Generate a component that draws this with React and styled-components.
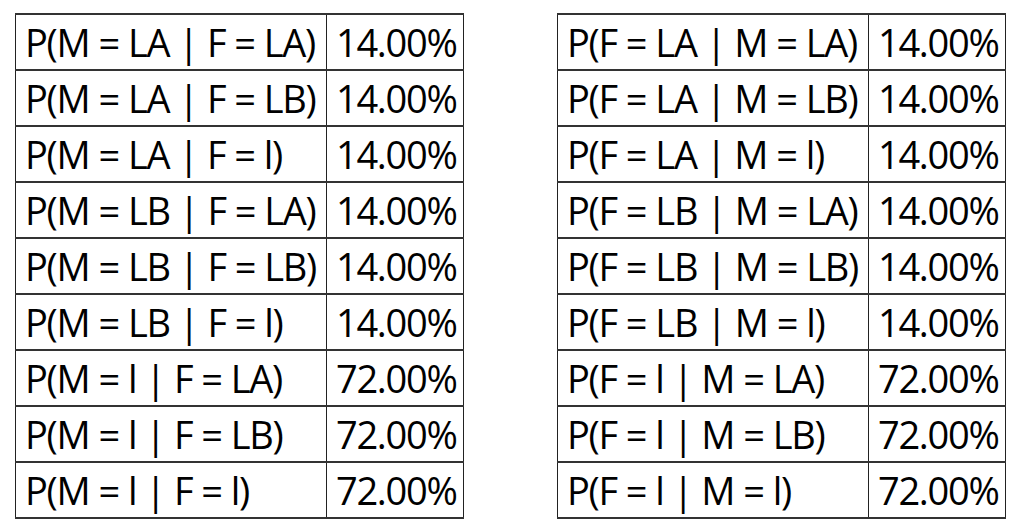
import React from "react";
import styled, { createGlobalStyle } from "styled-components";

const GlobalStyle = createGlobalStyle`
  html, body {
    margin: 0;
    padding: 0;
    background: #ffffff;
  }
`;

const left = [
  ["P(M = LA | F = LA)", "14.00%"],
  ["P(M = LA | F = LB)", "14.00%"],
  ["P(M = LA | F = l)", "14.00%"],
  ["P(M = LB | F = LA)", "14.00%"],
  ["P(M = LB | F = LB)", "14.00%"],
  ["P(M = LB | F = l)", "14.00%"],
  ["P(M = l | F = LA)", "72.00%"],
  ["P(M = l | F = LB)", "72.00%"],
  ["P(M = l | F = l)", "72.00%"],
];

const right = [
  ["P(F = LA | M = LA)", "14.00%"],
  ["P(F = LA | M = LB)", "14.00%"],
  ["P(F = LA | M = l)", "14.00%"],
  ["P(F = LB | M = LA)", "14.00%"],
  ["P(F = LB | M = LB)", "14.00%"],
  ["P(F = LB | M = l)", "14.00%"],
  ["P(F = l | M = LA)", "72.00%"],
  ["P(F = l | M = LB)", "72.00%"],
  ["P(F = l | M = l)", "72.00%"],
];

const ProbTable = ({ rows }) => {
  return (
    <Table>
      <colgroup>
        <col style={{ width: 311 }} />
        <col style={{ width: 137 }} />
      </colgroup>
      <tbody>
        {rows.map(([label, value]) => (
          <Row key={label}>
            <Cell>{label}</Cell>
            <Cell>{value}</Cell>
          </Row>
        ))}
      </tbody>
    </Table>
  );
};

export default function App() {
  return (
    <>
      <GlobalStyle />
      <Page>
        <ProbTable rows={left} />
        <ProbTable rows={right} />
      </Page>
    </>
  );
}

const Page = styled.div`
  display: flex;
  gap: 93px;
  padding: 13px 0 0 15px;
`;

const Table = styled.table`
  border-collapse: collapse;
  table-layout: fixed;
  width: 448px;
  font-family: "Open Sans", "Liberation Sans", sans-serif;
  font-size: 38px;
  font-weight: 500;
  letter-spacing: -1.3px;
  word-spacing: 0.5px;
  color: #000000;
`;

const Row = styled.tr`
  height: 56px;
`;

const Cell = styled.td`
  padding: 0 0 0 9px;
  border-top: 2px solid #333333;
  border-bottom: 2px solid #333333;
  border-left: 1px solid #222222;
  border-right: 1px solid #222222;
  line-height: 52px;
  white-space: nowrap;
  overflow: hidden;
  vertical-align: middle;
`;
